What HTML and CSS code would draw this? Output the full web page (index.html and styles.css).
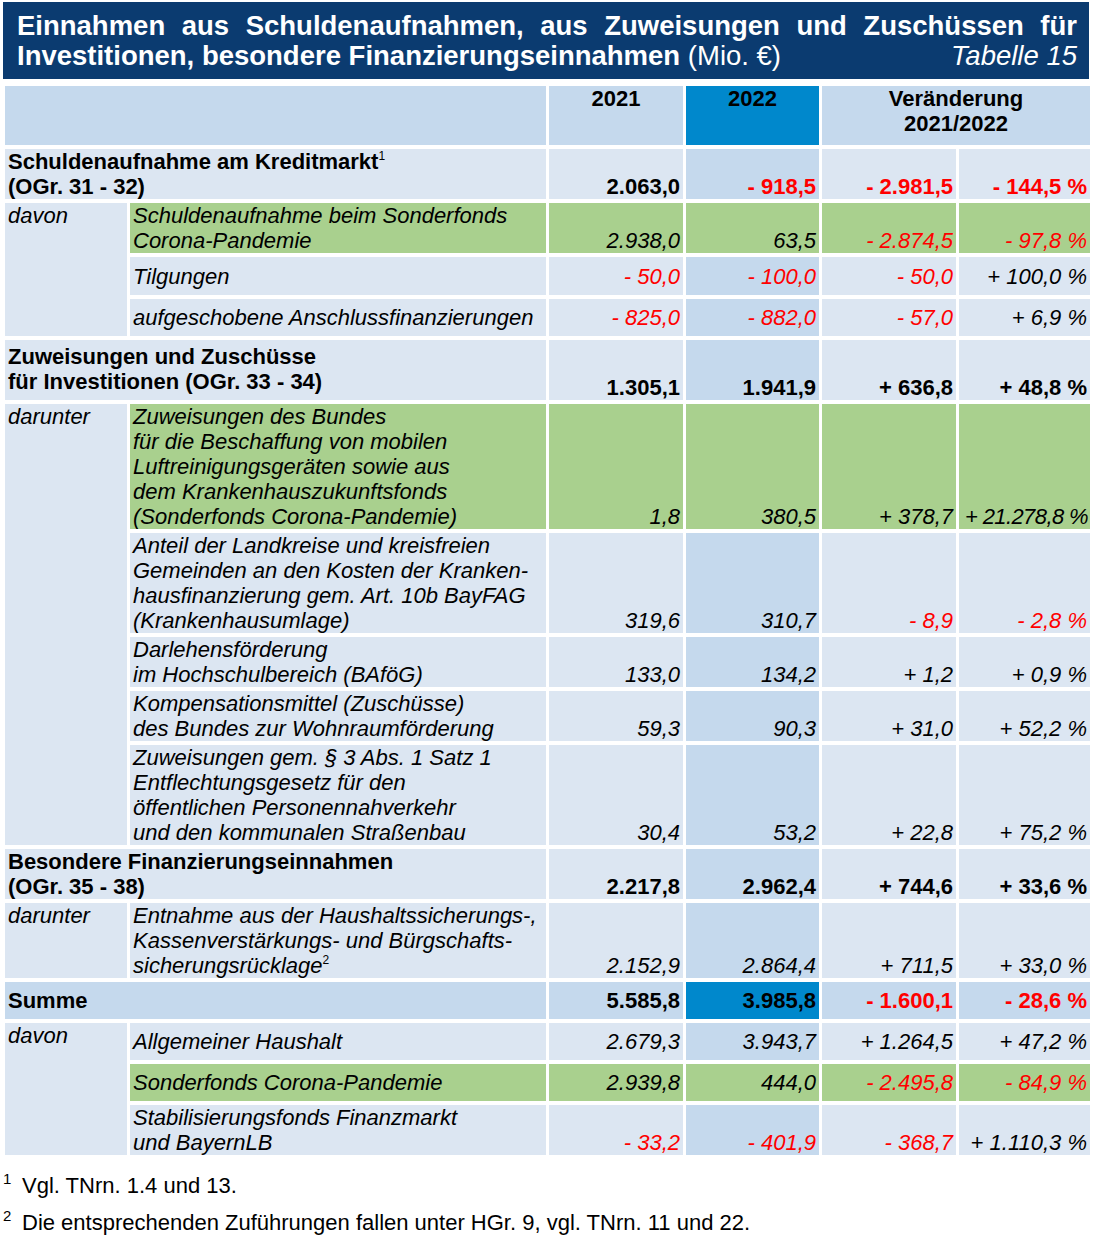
FILE: index.html
```html
<!DOCTYPE html>
<html lang="de">
<head>
<meta charset="utf-8">
<title>Tabelle 15</title>
<link rel="stylesheet" href="styles.css">
</head>
<body>
<div class="page">
  <header class="title">
    <div class="t1">Einnahmen aus Schuldenaufnahmen, aus Zuweisungen und Zuschüssen für</div>
    <div class="t2"><span><b>Investitionen, besondere Finanzierungseinnahmen</b> (Mio. €)</span><i>Tabelle 15</i></div>
  </header>

  <table class="tbl">
    <colgroup>
      <col class="w1"><col class="w2"><col class="w3"><col class="w4"><col class="w5"><col class="w6">
    </colgroup>
    <tbody>
      <tr class="h59 head">
        <td colspan="2" class="hd"></td>
        <td class="hd">2021</td>
        <td class="hd y22">2022</td>
        <td colspan="2" class="hd">Veränderung<br>2021/2022</td>
      </tr>
      <tr class="h50 main">
        <td colspan="2" class="lbl">Schuldenaufnahme am Kreditmarkt<sup>1</sup><br>(OGr. 31 - 32)</td>
        <td class="num">2.063,0</td>
        <td class="num c22 neg">- 918,5</td>
        <td class="num neg">- 2.981,5</td>
        <td class="num neg">- 144,5 %</td>
      </tr>
      <tr class="h50 sub green">
        <td rowspan="3" class="grp">davon</td>
        <td class="lbl">Schuldenaufnahme beim Sonderfonds<br>Corona-Pandemie</td>
        <td class="num">2.938,0</td>
        <td class="num">63,5</td>
        <td class="num neg">- 2.874,5</td>
        <td class="num neg">- 97,8 %</td>
      </tr>
      <tr class="h38 sub mid">
        <td class="lbl">Tilgungen</td>
        <td class="num neg">- 50,0</td>
        <td class="num c22 neg">- 100,0</td>
        <td class="num neg">- 50,0</td>
        <td class="num">+ 100,0 %</td>
      </tr>
      <tr class="h37 sub mid">
        <td class="lbl">aufgeschobene Anschlussfinanzierungen</td>
        <td class="num neg">- 825,0</td>
        <td class="num c22 neg">- 882,0</td>
        <td class="num neg">- 57,0</td>
        <td class="num">+ 6,9 %</td>
      </tr>
      <tr class="h60 main">
        <td colspan="2" class="lbl pt4">Zuweisungen und Zuschüsse<br>für Investitionen (OGr. 33 - 34)</td>
        <td class="num">1.305,1</td>
        <td class="num c22">1.941,9</td>
        <td class="num">+ 636,8</td>
        <td class="num">+ 48,8 %</td>
      </tr>
      <tr class="h125 sub green">
        <td rowspan="5" class="grp">darunter</td>
        <td class="lbl">Zuweisungen des Bundes<br>für die Beschaffung von mobilen<br>Luftreinigungsgeräten sowie aus<br>dem Krankenhauszukunftsfonds<br>(Sonderfonds Corona-Pandemie)</td>
        <td class="num">1,8</td>
        <td class="num">380,5</td>
        <td class="num">+ 378,7</td>
        <td class="num tight">+ 21.278,8 %</td>
      </tr>
      <tr class="h100 sub">
        <td class="lbl">Anteil der Landkreise und kreisfreien<br>Gemeinden an den Kosten der Kranken-<br>hausfinanzierung gem. Art. 10b BayFAG<br>(Krankenhausumlage)</td>
        <td class="num">319,6</td>
        <td class="num c22">310,7</td>
        <td class="num neg">- 8,9</td>
        <td class="num neg">- 2,8 %</td>
      </tr>
      <tr class="h50 sub">
        <td class="lbl">Darlehensförderung<br>im Hochschulbereich (BAföG)</td>
        <td class="num">133,0</td>
        <td class="num c22">134,2</td>
        <td class="num">+ 1,2</td>
        <td class="num">+ 0,9 %</td>
      </tr>
      <tr class="h50 sub">
        <td class="lbl">Kompensationsmittel (Zuschüsse)<br>des Bundes zur Wohnraumförderung</td>
        <td class="num">59,3</td>
        <td class="num c22">90,3</td>
        <td class="num">+ 31,0</td>
        <td class="num">+ 52,2 %</td>
      </tr>
      <tr class="h100 sub">
        <td class="lbl">Zuweisungen gem. § 3 Abs. 1 Satz 1<br>Entflechtungsgesetz für den<br>öffentlichen Personennahverkehr<br>und den kommunalen Straßenbau</td>
        <td class="num">30,4</td>
        <td class="num c22">53,2</td>
        <td class="num">+ 22,8</td>
        <td class="num">+ 75,2 %</td>
      </tr>
      <tr class="h50 main">
        <td colspan="2" class="lbl">Besondere Finanzierungseinnahmen<br>(OGr. 35 - 38)</td>
        <td class="num">2.217,8</td>
        <td class="num c22">2.962,4</td>
        <td class="num">+ 744,6</td>
        <td class="num">+ 33,6 %</td>
      </tr>
      <tr class="h75 sub">
        <td class="grp">darunter</td>
        <td class="lbl">Entnahme aus der Haushaltssicherungs-,<br>Kassenverstärkungs- und Bürgschafts-<br>sicherungsrücklage<sup>2</sup></td>
        <td class="num">2.152,9</td>
        <td class="num c22">2.864,4</td>
        <td class="num">+ 711,5</td>
        <td class="num">+ 33,0 %</td>
      </tr>
      <tr class="h37 main mid sum">
        <td colspan="2" class="lbl">Summe</td>
        <td class="num">5.585,8</td>
        <td class="num y22">3.985,8</td>
        <td class="num neg">- 1.600,1</td>
        <td class="num neg">- 28,6 %</td>
      </tr>
      <tr class="h37 sub mid">
        <td rowspan="3" class="grp">davon</td>
        <td class="lbl">Allgemeiner Haushalt</td>
        <td class="num">2.679,3</td>
        <td class="num c22">3.943,7</td>
        <td class="num">+ 1.264,5</td>
        <td class="num">+ 47,2 %</td>
      </tr>
      <tr class="h37 sub mid green">
        <td class="lbl">Sonderfonds Corona-Pandemie</td>
        <td class="num">2.939,8</td>
        <td class="num">444,0</td>
        <td class="num neg">- 2.495,8</td>
        <td class="num neg">- 84,9 %</td>
      </tr>
      <tr class="h50 sub">
        <td class="lbl">Stabilisierungsfonds Finanzmarkt<br>und BayernLB</td>
        <td class="num neg">- 33,2</td>
        <td class="num c22 neg">- 401,9</td>
        <td class="num neg">- 368,7</td>
        <td class="num">+ 1.110,3 %</td>
      </tr>
    </tbody>
  </table>

  <div class="notes">
    <p class="note"><sup>1</sup>Vgl. TNrn. 1.4 und 13.</p>
    <p class="note"><sup>2</sup>Die entsprechenden Zuführungen fallen unter HGr. 9, vgl. TNrn. 11 und 22.</p>
  </div>
</div>
</body>
</html>
```
FILE: styles.css
```css
html, body {
  margin: 0;
  padding: 0;
  background: #ffffff;
}
body {
  font-family: "Liberation Sans", Arial, sans-serif;
  color: #000000;
}
.page {
  padding-top: 2px;
}
.title {
  margin-left: 3px;
  width: 1086px;
  box-sizing: border-box;
  background: #0b3b70;
  color: #ffffff;
  padding: 9px 12px 8px 14px;
  font-size: 27.5px;
  line-height: 30px;
}
.t1 {
  font-weight: bold;
  text-align: justify;
  text-align-last: justify;
  white-space: nowrap;
}
.t2 {
  display: flex;
  justify-content: space-between;
  white-space: nowrap;
}
.t2 b { font-weight: bold; }
.t2 i { font-style: italic; }

.tbl {
  margin-top: 3px;
  margin-left: 2px;
  width: 1091px;
  table-layout: fixed;
  border-collapse: separate;
  border-spacing: 3px 4px;
  font-size: 22px;
  line-height: 25px;
}
.w1 { width: 122px; }
.w2 { width: 416px; }
.w3 { width: 134px; }
.w4 { width: 133px; }
.w5 { width: 134px; }
.w6 { width: 131px; }

.tbl td {
  background: #dce6f2;
  padding: 0 3px;
  vertical-align: top;
  white-space: nowrap;
  overflow: hidden;
}
.tbl td.num {
  text-align: right;
  vertical-align: bottom;
  padding-right: 3px;
}
.tbl td.tight {
  padding-left: 0;
  padding-right: 2px;
  letter-spacing: -0.6px;
}
.tbl td.c22 { background: #c5d9ed; }
.tbl td.hd {
  background: #c5d9ed;
  text-align: center;
  font-weight: bold;
}
.tbl td.y22 { background: #0088cc; }

.h59 { height: 59px; }
.h60 { height: 60px; }
.h50 { height: 50px; }
.h38 { height: 38px; }
.h37 { height: 37px; }
.h75 { height: 75px; }
.h100 { height: 100px; }
.h125 { height: 125px; }

.main td { font-weight: bold; }
.sub td { font-style: italic; }
.mid td, .mid td.num { vertical-align: middle; }
.tbl td.grp { vertical-align: top; }
.pt4 { padding-top: 4px !important; }

.green td.lbl, .green td.num { background: #a9d08e; }
.sum td { background: #c5d9ed; }
.sum td.y22 { background: #0088cc; }

.neg { color: #ff0000; }

.tbl sup {
  font-size: 12px;
  line-height: 0;
  vertical-align: 9px;
  font-style: normal;
  font-weight: normal;
}

.notes {
  margin-top: 14px;
  padding-left: 3px;
  font-size: 22px;
  line-height: 25px;
}
.note {
  margin: 0 0 12px 0;
}
.note sup {
  display: inline-block;
  width: 19px;
  font-size: 15px;
  line-height: 0;
  vertical-align: 9px;
}
```
